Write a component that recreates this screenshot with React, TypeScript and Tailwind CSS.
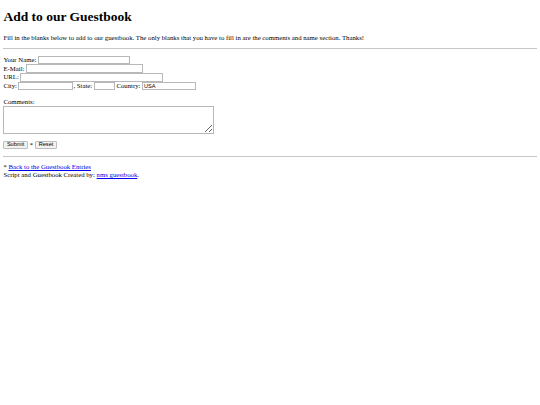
import React from 'react'

const input =
  "h-[8.6px] border border-[#b8b8b8] bg-white px-[1px] font-['Liberation_Sans',sans-serif] text-[5.6px] leading-none text-black outline-none"
const button =
  "h-[8px] rounded-[1px] border border-[#bdbdbd] bg-[#f2f2f2] px-[2.5px] font-['Liberation_Sans',sans-serif] text-[5.6px] leading-none text-black"

export default function App() {
  return (
    <div className="min-h-[405px] w-[540px] bg-white px-[3.4px] font-['Liberation_Serif',serif] text-[6.75px] leading-[7.76px] text-black">
      <h1 className="pt-[9px] text-[13.5px] font-bold leading-[15.6px]">Add to our Guestbook</h1>

      <p className="mt-[9px]">
        Fill in the blanks below to add to our guestbook. The only blanks that you have to fill in are the comments and name
        section. Thanks!
      </p>

      <hr className="mt-[6.7px] border-t border-[#c6c6c6]" />

      <form className="mt-[6.5px]" onSubmit={(e) => e.preventDefault()}>
        <div className="flex h-[8.7px] items-center gap-[1.5px]">
          Your Name:
          <input className={`${input} w-[92px]`} />
        </div>
        <div className="flex h-[8.7px] items-center gap-[1.5px]">
          E-Mail:
          <input className={`${input} w-[117px]`} />
        </div>
        <div className="flex h-[8.7px] items-center gap-[1.5px]">
          URL:
          <input className={`${input} w-[143px]`} />
        </div>
        <div className="flex h-[8.7px] items-center">
          City:
          <input className={`${input} ml-[1.5px] w-[55px]`} />
          <span>, State:</span>
          <input className={`${input} ml-[1.5px] w-[21px]`} />
          <span className="ml-[1.8px]">Country:</span>
          <input className={`${input} ml-[1.5px] w-[54px]`} defaultValue="USA" />
        </div>

        <div className="mt-[7.5px]">Comments:</div>
        <textarea className="block h-[28px] w-[211px] resize border border-[#b8b8b8] bg-white outline-none" />

        <div className="mt-[7.5px] flex items-center gap-[2px]">
          <button type="submit" className={button}>
            Submit
          </button>
          <span>*</span>
          <button type="reset" className={button}>
            Reset
          </button>
        </div>
      </form>

      <hr className="mt-[6.5px] border-t border-[#c6c6c6]" />

      <div className="mt-[6.7px]">
        *{' '}
        <a href="#" className="text-[#0000ee] underline">
          Back to the Guestbook Entries
        </a>
        <br />
        Script and Guestbook Created by:{' '}
        <a href="#" className="text-[#0000ee] underline">
          nms guestbook
        </a>
        .
      </div>
    </div>
  )
}
